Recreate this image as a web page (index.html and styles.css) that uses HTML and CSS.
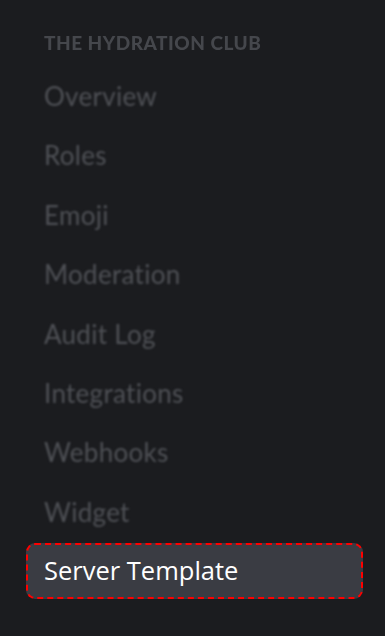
FILE: index.html
```html
<!DOCTYPE html>
<html>
<head>
<meta charset="utf-8">
<link rel="stylesheet" href="styles.css">
</head>
<body>
<nav class="sidebar">
  <div class="header">The Hydration Club</div>
  <ul class="menu">
    <li class="item">Overview</li>
    <li class="item">Roles</li>
    <li class="item">Emoji</li>
    <li class="item">Moderation</li>
    <li class="item">Audit Log</li>
    <li class="item">Integrations</li>
    <li class="item">Webhooks</li>
    <li class="item">Widget</li>
    <li class="item selected">Server Template</li>
  </ul>
</nav>
</body>
</html>
```
FILE: styles.css
```css
html, body {
  margin: 0;
  padding: 0;
  background: #1b1c1f;
  height: 100%;
}
body {
  font-family: Lato, "Open Sans", sans-serif;
  overflow: hidden;
}
.sidebar {
  padding: 30px 22px 0 26px;
}
.header {
  height: 26px;
  line-height: 26px;
  padding-left: 18px;
  font-size: 19px;
  font-weight: 900;
  letter-spacing: 0.5px;
  text-transform: uppercase;
  color: #45474c;
  filter: blur(0.7px);
  margin-bottom: 12px;
}
.menu {
  list-style: none;
  margin: 0;
  padding: 0;
  display: flex;
  flex-direction: column;
  gap: 3.4px;
}
.item {
  height: 56px;
  line-height: 56px;
  padding-left: 18px;
  font-size: 26px;
  letter-spacing: 0.3px;
  color: #4f5156;
  filter: blur(0.8px);
  box-sizing: border-box;
}
.item.selected {
  filter: none;
  color: #ffffff;
  background: #3a3c43;
  border: 2px dashed #ff0000;
  border-radius: 9px;
  line-height: 51px;
  padding-left: 16px;
  font-family: "Open Sans", Lato, sans-serif;
  font-size: 25.5px;
  letter-spacing: 0;
}
```
